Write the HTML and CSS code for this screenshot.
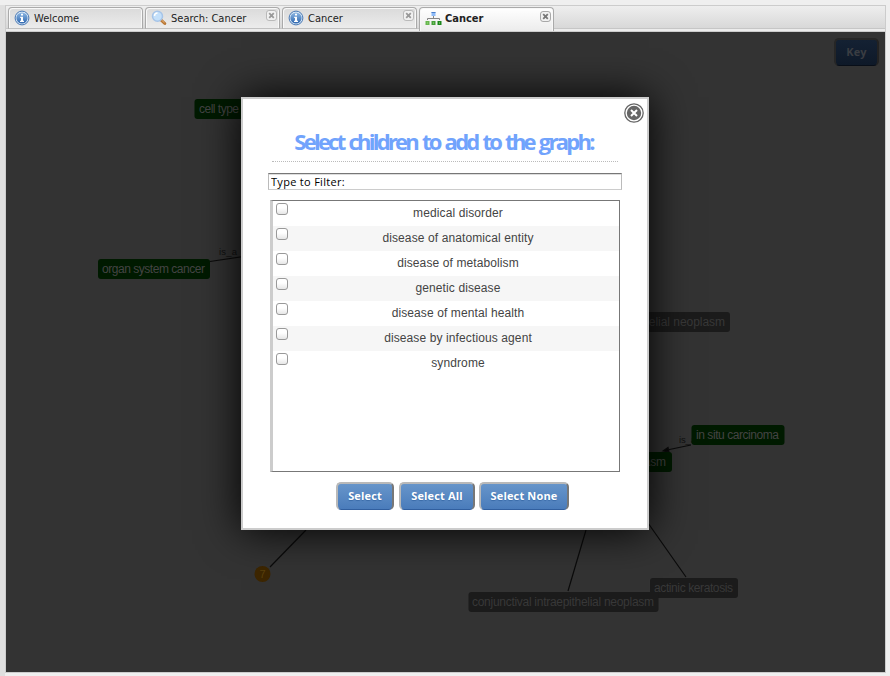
FILE: index.html
```html
<!DOCTYPE html>
<html lang="en">
<head>
<meta charset="utf-8">
<title>Cancer</title>
<link rel="stylesheet" href="styles.css">
</head>
<body>
<svg width="0" height="0" class="defs">
  <defs>
    <linearGradient id="blue" x1="0" y1="0" x2="0" y2="1"><stop offset="0" stop-color="#8db8e4"/><stop offset="1" stop-color="#2e66ae"/></linearGradient>
    <symbol id="info" viewBox="0 0 16 16">
      <circle cx="8" cy="8" r="6.9" fill="#dce9f6" stroke="#4878b4" stroke-width="1"/>
      <circle cx="8" cy="8" r="5.6" fill="url(#blue)"/>
      <path d="M7 3.8h2v1.8H7zM6.2 6.8H9v4h1V12H6v-1.200h1V8h-.8z" fill="#fff"/>
    </symbol>
    <symbol id="x" viewBox="0 0 11 11">
      <rect x=".5" y=".5" width="10" height="10" rx="2.500" fill="#f1f1f1" stroke="currentColor" stroke-opacity=".6"/>
      <path d="M3.200 3.200l4.600 4.600M7.800 3.200l-4.600 4.600" stroke="currentColor" stroke-width="1.800"/>
    </symbol>
  </defs>
</svg>
<main class="panel">
  <nav class="tabs">
    <div class="tab"><svg class="icon"><use href="#info"/></svg><span>Welcome</span></div>
    <div class="tab">
      <svg class="icon" viewBox="0 0 16 16"><path d="M10 10l3.800 3.500" stroke="#b87532" stroke-width="3" stroke-linecap="round"/><path d="M10.500 10l3 2.800" stroke="#e6b47c" stroke-width="1"/><circle cx="6.500" cy="6.300" r="5" fill="#c4e0fa" stroke="#a6c4e8" stroke-width="1.500"/><path d="M3.500 6a3 3 0 0 1 3-3" stroke="#fff" fill="none" stroke-width="1.500"/></svg>
      <span>Search: Cancer</span><svg class="close"><use href="#x"/></svg>
    </div>
    <div class="tab"><svg class="icon"><use href="#info"/></svg><span>Cancer</span><svg class="close"><use href="#x"/></svg></div>
    <div class="tab active">
      <svg class="icon wide" viewBox="0 0 17 16"><path d="M8.500 5v3M2.500 9v-1.500h12V9" fill="none" stroke="#858585"/><rect x="6.500" y="1" width="4" height="4" fill="#8fbcf8"/><rect x="6.500" y="1" width="4" height="1" fill="#4c80cc"/><path d="M.5 10h4v4h-4z" fill="#67b74e"/><path d="M6.500 10h4v4h-4z" fill="#45a038"/><path d="M12.500 10h4v4h-4z" fill="#1d861c"/><path d="M2 11.500h1v1H2zM8 11.500h1v1H8zM14 11.500h1v1h-1z" fill="#9bdb83"/></svg>
      <span>Cancer</span><svg class="close"><use href="#x"/></svg>
    </div>
  </nav>
  <section class="stage">
    <svg class="graph" viewBox="6 32 879 640" width="879" height="640">
      <g class="edges">
        <path d="M210 261.500L260 254M691 445l-24 5M586 530l-18 61M648 523l38 54M306 530l-36 37"/>
        <path class="arrow" d="M663 451l5-3.500 1 4.500z"/>
      </g>
      <g class="edge-text">
        <text x="219" y="255" textLength="18">is_a</text>
        <text x="679" y="443" textLength="17">is_a</text>
      </g>
      <g class="node green"><rect x="194.500" y="99" width="58" height="20" rx="3"/><text x="199" y="113" textLength="40">cell type</text></g>
      <g class="node green"><rect x="98" y="259" width="112" height="20" rx="3"/><text x="102" y="273" textLength="103">organ system cancer</text></g>
      <g class="node gray"><rect x="600" y="312" width="130" height="20" rx="3"/><text x="623" y="326" textLength="102">epithelial neoplasm</text></g>
      <g class="node green"><rect x="691.500" y="425" width="93" height="20" rx="3"/><text x="696" y="439" textLength="83">in situ carcinoma</text></g>
      <g class="node green"><rect x="600" y="452" width="72" height="20" rx="3"/><text x="615" y="466" textLength="51">neoplasm</text></g>
      <g class="node gray"><rect x="650" y="578" width="88" height="20" rx="3"/><text x="654" y="592" textLength="79">actinic keratosis</text></g>
      <g class="node gray"><rect x="468.500" y="592" width="190" height="20" rx="3"/><text x="472" y="606" textLength="182">conjunctival intraepithelial neoplasm</text></g>
      <g class="count"><circle cx="262.500" cy="574" r="8"/><text x="259.500" y="578">7</text></g>
    </svg>
    <button class="btn key">Key</button>
    <div class="dialog">
      <svg class="dismiss" viewBox="0 0 20 20"><circle cx="10" cy="10" r="9.200" fill="#fff" stroke="#666" stroke-width="1.300"/><circle cx="10" cy="10" r="7.200" fill="#666"/><path d="M7 7l6 6M13 7l-6 6" stroke="#fff" stroke-width="2"/></svg>
      <h1>Select children to add to the graph:</h1>
      <input class="filter" type="text" value="Type to Filter:">
      <div class="list">
        <label><input type="checkbox"><span>medical disorder</span></label>
        <label><input type="checkbox"><span>disease of anatomical entity</span></label>
        <label><input type="checkbox"><span>disease of metabolism</span></label>
        <label><input type="checkbox"><span>genetic disease</span></label>
        <label><input type="checkbox"><span>disease of mental health</span></label>
        <label><input type="checkbox"><span>disease by infectious agent</span></label>
        <label><input type="checkbox"><span>syndrome</span></label>
      </div>
      <div class="actions"><button class="btn b1">Select</button><button class="btn b2">Select All</button><button class="btn b3">Select None</button></div>
    </div>
  </section>
</main>
</body>
</html>
```
FILE: styles.css
```css
* { box-sizing: border-box; }
html, body { height: 100%; overflow: hidden; }
body { margin: 0; padding: 5px 4px 3px 5px; background: linear-gradient(90deg, #dfdfdf 5px, #efefef 5px); font-family: "Liberation Sans", sans-serif; box-shadow: inset 0 5px #efefef; }
.defs { position: absolute; }
.panel { height: 668px; border: 1px solid #ccc; background: #e8e8e8; }
.tabs { height: 26px; padding: 1px 1px 0 2px; display: flex; gap: 2px; background: linear-gradient(#eee, #d8d8d8 22px, #c6c6c6 22px, #c6c6c6 23px, #ececec 23px, #ececec 25px, #ccc 25px); }
.tab { width: 135px; height: 22px; padding: 0 2px 0 5px; display: flex; align-items: center; border: 1px solid #aaa; border-bottom-color: #c0c0c0; border-radius: 4px 4px 0 0; background: linear-gradient(#dadada, #ececec); box-shadow: inset 1px 1px #f8f8f8, inset -1px 0 #f8f8f8; font: 11px "DejaVu Sans Condensed", sans-serif; color: #222; }
.tab.active { height: 24px; padding-bottom: 2px; border-bottom: 0; background: linear-gradient(#fff, #ececec); font-weight: bold; }
.icon { width: 16px; height: 16px; flex: none; margin-right: 4px; }
.icon.wide { width: 17px; margin-right: 3px; }
.close { width: 11px; height: 11px; margin: 0 0 5px auto; color: #999; }
.active .close { color: #777; }
.stage { position: relative; height: 640px; background: #333; overflow: hidden; }
.graph { display: block; }
.edges path { fill: none; stroke: #0b0b0b; stroke-width: 1.200; }
.edges .arrow { fill: #080808; }
.edge-text { font-size: 9.500px; fill: #111; }
.node { font-size: 12px; }
.green rect { fill: #001a00; }
.green text { fill: #444; }
.gray rect { fill: #1b1b1b; }
.gray text { fill: #383838; }
.count { font-size: 11px; }
.count circle { fill: #3d2600; }
.count text { fill: #5a400c; }
.btn { height: 28px; padding: 0 0 2px; border: 2px solid; border-color: #b9b9b9 #777 #315f9f #b9b9b9; border-bottom-width: 1px; border-radius: 5px; background: linear-gradient(#6795ca, #4a7cbb); color: #fff; font: bold 11px "Open Sans", sans-serif; letter-spacing: .15px; text-shadow: 0 1px 1px #3869a6; }
.key { position: absolute; left: 828px; top: 6px; width: 45px; height: 28px; border-color: #262626 #222 #080e18 #262626; background: linear-gradient(#142133, #0e1928); color: #3a3d42; text-shadow: none; }
.dialog { position: absolute; left: 235px; top: 65px; width: 408px; height: 433px; padding: 27px 25px 0; border: 2px solid #ccc; background: #fff; box-shadow: 0 0 40px #000; }
.dismiss { position: absolute; left: 381px; top: 4px; width: 20px; height: 20px; }
h1 { width: 346px; height: 36px; margin: 0 0 0 4px; border-bottom: 1px dotted #bbb; color: #71a3fc; font: bold 22px/31px "Open Sans", sans-serif; text-align: center; letter-spacing: -2.750px; word-spacing: 2px; text-indent: -3px; white-space: nowrap; }
.filter { display: block; width: 354px; height: 17px; margin-top: 11px; padding: 0 2px; border: 1px solid; border-color: #777 #bbb #ccc; box-shadow: inset 0 1px #ddd; font: 11px "Open Sans", sans-serif; letter-spacing: .300px; color: #000; outline: 0; }
.list { width: 350px; height: 272px; margin: 10px 0 0 2px; border: 1px solid #777; border-left: 3px solid #ccc; }
.list label { display: flex; height: 25px; padding: 2px 0 0 3px; }
.list label:nth-child(even) { background: #f6f6f6; }
.list input { appearance: none; width: 12px; height: 12px; margin: 0; flex: none; border: 1px solid #999; border-radius: 3px; background: linear-gradient(#fff 40%, #e6e6e6); }
.list span { flex: 1; padding: 3px 0 0 9px; text-align: center; font-size: 12px; line-height: 14px; letter-spacing: .110px; color: #444; }
.actions { display: flex; justify-content: center; gap: 5px; margin: 10px 0 0 15px; }
.b1 { width: 58px; }
.b2 { width: 76px; }
.b3 { width: 90px; margin-left: -1px; }
```
